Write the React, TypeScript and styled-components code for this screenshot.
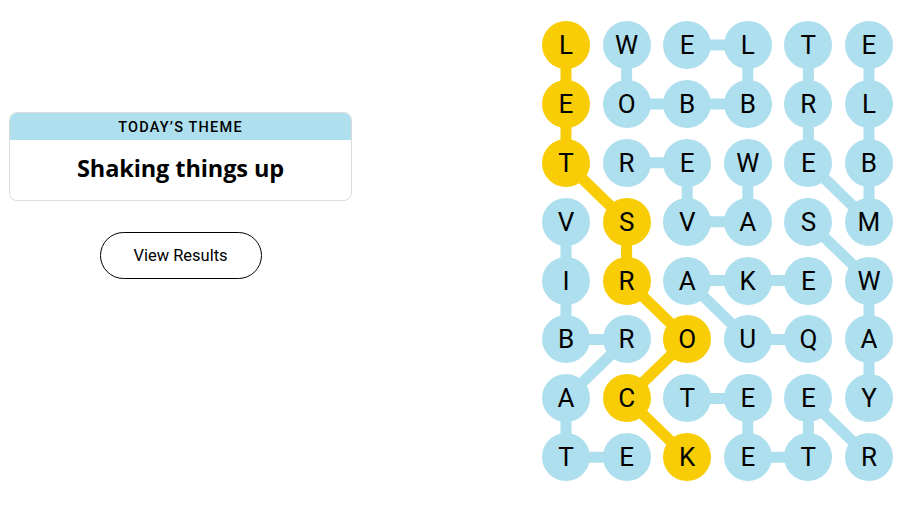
import React from "react";
import styled, { createGlobalStyle } from "styled-components";

const GlobalStyle = createGlobalStyle`
  html, body { margin: 0; padding: 0; background: #ffffff; }
  body { font-family: "Roboto", "Liberation Sans", sans-serif; color: #000; }
`;

const BLUE = "#aedfee";
const YELLOW = "#f8cd05";

const COL_PITCH = 60.6;
const ROW_PITCH = 58.9;
const R = 24;

const Page = styled.div`
  width: 906px;
  height: 510px;
  display: flex;
  align-items: flex-start;
  box-sizing: border-box;
`;

const LeftPanel = styled.div`
  width: 343px;
  margin-left: 9px;
  margin-top: 112px;
  display: flex;
  flex-direction: column;
  align-items: center;
`;

const ThemeCard = styled.div`
  width: 100%;
  box-sizing: border-box;
  border: 1px solid #dcdcdc;
  border-radius: 8px;
  overflow: hidden;
  display: flex;
  flex-direction: column;
`;

const ThemeHeader = styled.div`
  background: ${BLUE};
  height: 27px;
  display: flex;
  align-items: center;
  justify-content: center;
  font-size: 14.5px;
  font-weight: 500;
  letter-spacing: 1.2px;
  text-transform: uppercase;
  padding-top: 1px;
  box-sizing: border-box;
`;

const ThemeTitle = styled.div`
  height: 60px;
  padding-bottom: 5px;
  box-sizing: border-box;
  display: flex;
  align-items: center;
  justify-content: center;
  font-family: "Open Sans", "Roboto", sans-serif;
  font-size: 23.5px;
  font-weight: 700;
  letter-spacing: -0.1px;
`;

const ResultsButton = styled.button`
  margin-top: 31px;
  width: 162px;
  height: 47px;
  border: 1px solid #000;
  border-radius: 24px;
  background: #fff;
  font-family: "Roboto", "Liberation Sans", sans-serif;
  font-size: 16.5px;
  color: #000;
  cursor: pointer;
`;

const Board = styled.div`
  position: relative;
  margin-left: 190px;
  margin-top: 21px;
`;

const Lines = styled.svg`
  position: absolute;
  left: 0;
  top: 0;
  overflow: visible;
  pointer-events: none;
`;

const Grid = styled.div`
  position: relative;
  display: grid;
  grid-template-columns: repeat(6, ${R * 2}px);
  grid-auto-rows: ${R * 2}px;
  column-gap: ${COL_PITCH - R * 2}px;
  row-gap: ${ROW_PITCH - R * 2}px;
`;

const Cell = styled.div<{ $spangram: boolean }>`
  width: ${R * 2}px;
  height: ${R * 2}px;
  border-radius: 50%;
  background: ${(p) => (p.$spangram ? YELLOW : BLUE)};
  display: flex;
  align-items: center;
  justify-content: center;
  font-size: 26px;
  font-weight: 400;
  color: #000;
  line-height: 1;
`;

const letters = [
  "LWELTE",
  "EOBBRL",
  "TREWEB",
  "VSVASM",
  "IRAKEW",
  "BROUQA",
  "ACTEEY",
  "TEKETR",
];

type P = [number, number];

const spangram: P[] = [
  [0, 0], [1, 0], [2, 0], [3, 1], [4, 1], [5, 2], [6, 1], [7, 2],
];

const words: P[][] = [
  [[0, 1], [1, 1], [1, 2], [1, 3], [0, 3], [0, 2]],
  [[0, 4], [1, 4], [2, 4], [3, 5], [2, 5], [1, 5], [0, 5]],
  [[2, 3], [3, 3], [3, 2], [2, 2], [2, 1]],
  [[3, 0], [4, 0], [5, 0], [5, 1], [6, 0], [7, 0], [7, 1]],
  [[3, 4], [4, 5], [5, 5], [6, 5]],
  [[5, 4], [5, 3], [4, 2], [4, 3], [4, 4]],
  [[6, 2], [6, 3], [7, 3], [7, 4], [6, 4], [7, 5]],
];

const isSpan = (r: number, c: number) =>
  spangram.some(([a, b]) => a === r && b === c);

const pt = ([r, c]: P) => `${R + c * COL_PITCH},${R + r * ROW_PITCH}`;

const Path: React.FC<{ pts: P[]; color: string }> = ({ pts, color }) => (
  <polyline
    points={pts.map(pt).join(" ")}
    fill="none"
    stroke={color}
    strokeWidth={11}
    strokeLinejoin="round"
    strokeLinecap="round"
  />
);

export default function App() {
  return (
    <>
      <GlobalStyle />
      <Page>
        <LeftPanel>
          <ThemeCard>
            <ThemeHeader>Today’s Theme</ThemeHeader>
            <ThemeTitle>Shaking things up</ThemeTitle>
          </ThemeCard>
          <ResultsButton>View Results</ResultsButton>
        </LeftPanel>
        <Board>
          <Lines width={R * 2 + 5 * COL_PITCH} height={R * 2 + 7 * ROW_PITCH}>
            {words.map((w, i) => (
              <Path key={i} pts={w} color={BLUE} />
            ))}
            <Path pts={spangram} color={YELLOW} />
          </Lines>
          <Grid>
            {letters.map((row, r) =>
              row.split("").map((ch, c) => (
                <Cell key={`${r}-${c}`} $spangram={isSpan(r, c)}>
                  {ch}
                </Cell>
              ))
            )}
          </Grid>
        </Board>
      </Page>
    </>
  );
}
